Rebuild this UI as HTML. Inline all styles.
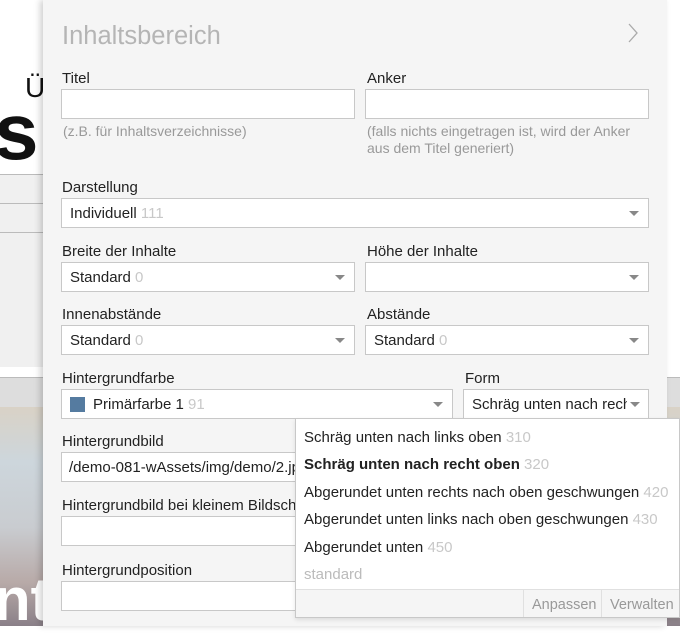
<!DOCTYPE html>
<html><head><meta charset="utf-8"><style>
*{box-sizing:border-box;margin:0;padding:0}
body{width:680px;height:626px;overflow:hidden;position:relative;background:#fff;font-family:"Liberation Sans",Arial,sans-serif;font-size:15px;color:#222}
.a{position:absolute}
.panel{position:absolute;left:43px;top:0;width:624px;height:626px;background:#f5f5f5;box-shadow:-3px 0 6px rgba(0,0,0,.18)}
.lbl{position:absolute;font-size:15px;color:#222;line-height:17px}
.in{position:absolute;height:30px;background:#fff;border:1px solid #c8c8c8;line-height:29px;padding-left:8px;font-size:15px;white-space:nowrap;overflow:hidden}
.n{color:#c8c8c8}
.car{position:absolute;right:9px;top:12px;width:0;height:0;border-left:5px solid transparent;border-right:5px solid transparent;border-top:5px solid #888}
.help{position:absolute;color:#999;font-size:14px;line-height:17px}
.dd{position:absolute;left:295px;top:418px;width:385px;height:200px;background:#fff;border:1px solid #c8c8c8;box-shadow:0 2px 4px rgba(0,0,0,.1)}
.it{position:absolute;left:8px;font-size:15px;white-space:nowrap}
</style></head><body>
<div class="a" style="left:0;top:0;width:60px;height:174px;background:#fff"></div>
<div class="a" style="left:25px;top:72px;font-size:28px;color:#111">Ü</div>
<div class="a" style="left:-6px;top:92px;font-size:80px;font-weight:bold;color:#111;line-height:80px">s</div>
<div class="a" style="left:0;top:174px;width:60px;height:1px;background:#bbb"></div>
<div class="a" style="left:0;top:175px;width:60px;height:192px;background:#f0f0f0"></div>
<div class="a" style="left:0;top:203px;width:60px;height:1px;background:#bbb"></div>
<div class="a" style="left:0;top:232px;width:60px;height:1px;background:#bbb"></div>
<div class="a" style="left:0;top:367px;width:680px;height:10px;background:#fff"></div>
<div class="a" style="left:0;top:377px;width:680px;height:30px;background:#ddd;border-top:1px solid #bbb"></div>
<div class="a" style="left:0;top:407px;width:680px;height:219px;background:linear-gradient(180deg,#d9d2c6 0%,#cdd6dc 25%,#c9ccd0 55%,#b8aaa8 80%,#8a8088 100%)"></div>
<div class="a" style="left:-6px;top:570px;font-size:60px;font-weight:bold;color:#fff;line-height:60px">nt</div>

<div class="panel">
<div class="a" style="left:19px;top:22px;font-size:25.5px;color:#b5b5b5">Inhaltsbereich</div>
<svg class="a" style="left:584px;top:22px" width="12" height="22"><path d="M2 2 L10 11 L2 20" fill="none" stroke="#aaa" stroke-width="1.3"/></svg>

<div class="lbl" style="left:19px;top:70px">Titel</div>
<div class="in" style="left:18px;top:89px;width:294px"></div>
<div class="help" style="left:20px;top:123px">(z.B. für Inhaltsverzeichnisse)</div>
<div class="lbl" style="left:324px;top:70px">Anker</div>
<div class="in" style="left:322px;top:89px;width:284px"></div>
<div class="help" style="left:324px;top:123px">(falls nichts eingetragen ist, wird der Anker<br>aus dem Titel generiert)</div>

<div class="lbl" style="left:19px;top:179px">Darstellung</div>
<div class="in" style="left:18px;top:198px;width:588px">Individuell <span class="n">111</span><i class="car"></i></div>

<div class="lbl" style="left:19px;top:243px">Breite der Inhalte</div>
<div class="in" style="left:18px;top:262px;width:294px">Standard <span class="n">0</span><i class="car"></i></div>
<div class="lbl" style="left:324px;top:243px">Höhe der Inhalte</div>
<div class="in" style="left:322px;top:262px;width:284px"><i class="car"></i></div>

<div class="lbl" style="left:19px;top:306px">Innenabstände</div>
<div class="in" style="left:18px;top:325px;width:294px">Standard <span class="n">0</span><i class="car"></i></div>
<div class="lbl" style="left:324px;top:306px">Abstände</div>
<div class="in" style="left:322px;top:325px;width:284px">Standard <span class="n">0</span><i class="car"></i></div>

<div class="lbl" style="left:19px;top:370px">Hintergrundfarbe</div>
<div class="in" style="left:18px;top:389px;width:392px"><span style="display:inline-block;width:15px;height:15px;background:#557ba0;vertical-align:-3px;margin-right:8px"></span>Primärfarbe 1 <span class="n">91</span><i class="car"></i></div>
<div class="lbl" style="left:422px;top:370px">Form</div>
<div class="in" style="left:420px;top:389px;width:186px;padding-right:22px"><span style="display:block;overflow:hidden;width:155px">Schräg unten nach recht oben</span><i class="car" style="right:8px"></i></div>

<div class="lbl" style="left:19px;top:433px">Hintergrundbild</div>
<div class="in" style="left:18px;top:452px;width:400px;padding-left:7px">/demo-081-wAssets/img/demo/2.jpg</div>
<div class="lbl" style="left:19px;top:497px">Hintergrundbild bei kleinem Bildschirm</div>
<div class="in" style="left:18px;top:516px;width:400px"></div>
<div class="lbl" style="left:19px;top:562px">Hintergrundposition</div>
<div class="in" style="left:18px;top:581px;width:400px"></div>
</div>

<div class="dd">
<div class="it" style="top:10px">Schräg unten nach links oben <span class="n">310</span></div>
<div class="it" style="top:37px;font-weight:bold">Schräg unten nach recht oben <span class="n" style="font-weight:normal">320</span></div>
<div class="it" style="top:65px">Abgerundet unten rechts nach oben geschwungen <span class="n">420</span></div>
<div class="it" style="top:92px">Abgerundet unten links nach oben geschwungen <span class="n">430</span></div>
<div class="it" style="top:120px">Abgerundet unten <span class="n">450</span></div>
<div class="it" style="top:147px;color:#bbb">standard</div>
<div class="a" style="left:0;top:170px;width:383px;height:28px;background:#f5f5f5;border-top:1px solid #e0e0e0"></div>
<div class="a" style="left:227px;top:171px;width:1px;height:27px;background:#e0e0e0"></div>
<div class="a" style="left:305px;top:171px;width:1px;height:27px;background:#e0e0e0"></div>
<div class="a" style="left:236px;top:178px;color:#999;font-size:14.5px">Anpassen</div>
<div class="a" style="left:314px;top:178px;color:#999;font-size:14.5px">Verwalten</div>
</div>
</body></html>
